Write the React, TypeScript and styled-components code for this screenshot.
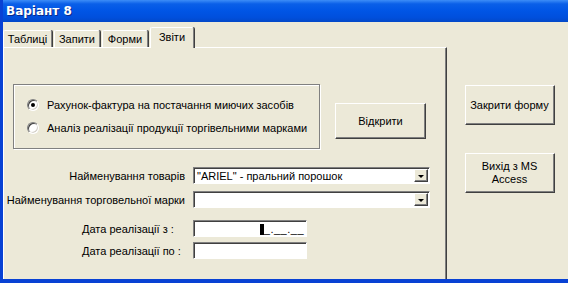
import styled, { createGlobalStyle } from 'styled-components'

const Global = createGlobalStyle`
  html, body { margin: 0; padding: 0; background: #ece9d8; }
  body { font-family: "Liberation Sans", Arial, sans-serif; font-size: 11px; color: #000; }
`

const Window = styled.div`
  width: 568px;
  height: 283px;
  display: flex;
  flex-direction: column;
  box-sizing: border-box;
  background: #ece9d8;
  border-left: 3px solid #0841d4;
  border-bottom: 4px solid #0841d4;
  overflow: hidden;
`

const TitleBar = styled.div`
  height: 22px;
  margin-left: -3px;
  display: flex;
  align-items: center;
  padding-left: 6px;
  background: linear-gradient(180deg, #3d8df7 0%, #0a5fe8 18%, #0055e5 50%, #004fdc 80%, #0348c8 100%);
  color: #fff;
  font-family: "DejaVu Sans", Tahoma, sans-serif;
  font-weight: bold;
  font-size: 12px;
  text-shadow: 1px 1px 0 #0a2a8a;
  flex-shrink: 0;
`

const Body = styled.div`
  flex: 1;
  display: flex;
  min-height: 0;
`

const TabArea = styled.div`
  width: 444px;
  display: flex;
  flex-direction: column;
  padding-top: 5px;
`

const TabStrip = styled.div`
  display: flex;
  align-items: flex-end;
  gap: 2px;
  height: 20px;
`

const Tab = styled.div<{ $active?: boolean; $w: number }>`
  width: ${p => p.$w}px;
  box-sizing: border-box;
  height: ${p => (p.$active ? 21 : 17)}px;
  margin-bottom: ${p => (p.$active ? -1 : 0)}px;
  position: relative;
  z-index: ${p => (p.$active ? 2 : 1)};
  background: #ece9d8;
  border-top: 1px solid #fff;
  border-left: 1px solid #fff;
  border-right: 1px solid #808080;
  box-shadow: 1px 0 0 #404040;
  display: flex;
  align-items: ${p => (p.$active ? 'flex-start' : 'center')};
  padding-top: ${p => (p.$active ? 3 : 0)}px;
  justify-content: center;
  border-radius: 2px 2px 0 0;
`

const Pane = styled.div`
  flex: 1;
  box-sizing: border-box;
  border-top: 1px solid #fff;
  border-left: 1px solid #fff;
  border-right: 1px solid #404040;
  box-shadow: inset -1px 0 0 #808080;
  display: flex;
  flex-direction: column;
  padding: 36px 0 0 9px;
`

const TopRow = styled.div`
  display: flex;
  align-items: flex-end;
  gap: 15px;
`

const OptionGroup = styled.div`
  width: 307px;
  height: 65px;
  box-sizing: border-box;
  border: 1px solid #808080;
  box-shadow: inset 1px 1px 0 #fff, 1px 1px 0 #fff;
  display: flex;
  flex-direction: column;
  justify-content: center;
  gap: 9px;
  padding-left: 13px;
`

const OptionRow = styled.label`
  display: flex;
  align-items: center;
  gap: 8px;
  height: 14px;
`

const Radio = styled.span<{ $checked?: boolean }>`
  width: 12px;
  height: 12px;
  box-sizing: border-box;
  border-radius: 50%;
  background: #fff;
  border: 1px solid;
  border-color: #808080 #fff #fff #808080;
  box-shadow: inset 1px 1px 0 #404040, inset -1px -1px 0 #d4d0c8;
  display: flex;
  align-items: center;
  justify-content: center;
  &::after {
    content: '';
    width: 4px;
    height: 4px;
    border-radius: 50%;
    background: ${p => (p.$checked ? '#000' : 'transparent')};
  }
`

const Button = styled.div<{ $w: number; $h: number }>`
  width: ${p => p.$w}px;
  height: ${p => p.$h}px;
  box-sizing: border-box;
  border: 1px solid;
  border-color: #fff #404040 #404040 #fff;
  box-shadow: inset -1px -1px 0 #808080;
  background: #ece9d8;
  display: flex;
  align-items: center;
  justify-content: center;
  text-align: center;
  line-height: 13px;
  flex-shrink: 0;
`

const OpenButton = styled(Button)`
  margin-bottom: 10px;
`

const Form = styled.div`
  display: grid;
  grid-template-columns: 179px auto;
  column-gap: 8px;
  margin-top: 18px;
  margin-left: -7px;
  align-items: center;
`

const Label = styled.div<{ $left?: boolean; $gap: number }>`
  text-align: ${p => (p.$left ? 'left' : 'right')};
  padding-left: ${p => (p.$left ? 76 : 0)}px;
  margin-bottom: ${p => p.$gap}px;
  white-space: nowrap;
`

const Field = styled.div<{ $w: number; $gap: number }>`
  width: ${p => p.$w}px;
  height: 17px;
  box-sizing: border-box;
  background: #fff;
  border: 1px solid;
  border-color: #808080 #fff #fff #808080;
  box-shadow: inset 1px 1px 0 #404040;
  margin-bottom: ${p => p.$gap}px;
  display: flex;
  align-items: center;
  padding-left: 3px;
  white-space: nowrap;
`

const ComboText = styled.span`
  flex: 1;
`

const DropButton = styled.span`
  width: 14px;
  height: 13px;
  margin-right: 1px;
  box-sizing: border-box;
  background: #ece9d8;
  border: 1px solid;
  border-color: #fff #404040 #404040 #fff;
  box-shadow: inset -1px -1px 0 #808080;
  display: flex;
  align-items: center;
  justify-content: center;
  &::after {
    content: '';
    border-left: 3px solid transparent;
    border-right: 3px solid transparent;
    border-top: 3px solid #000;
    margin-top: 1px;
  }
`

const MaskText = styled.span`
  margin-left: auto;
  margin-right: 2px;
  letter-spacing: 0.5px;
`

const Caret = styled.span`
  display: inline-block;
  width: 4px;
  height: 11px;
  background: #000;
  vertical-align: -2px;
`

const RightColumn = styled.div`
  flex: 1;
  display: flex;
  flex-direction: column;
  align-items: center;
  padding-top: 63px;
  padding-left: 4px;
  gap: 28px;
`

export default function App() {
  return (
    <>
      <Global />
      <Window>
        <TitleBar>Варіант 8</TitleBar>
        <Body>
          <TabArea>
            <TabStrip>
              <Tab $w={49}>Таблиці</Tab>
              <Tab $w={46}>Запити</Tab>
              <Tab $w={46}>Форми</Tab>
              <Tab $w={44} $active>Звіти</Tab>
            </TabStrip>
            <Pane>
              <TopRow>
                <OptionGroup>
                  <OptionRow><Radio $checked />Рахунок-фактура на постачання миючих засобів</OptionRow>
                  <OptionRow><Radio />Аналіз реалізації продукції торгівельними марками</OptionRow>
                </OptionGroup>
                <OpenButton $w={91} $h={36}>Відкрити</OpenButton>
              </TopRow>
              <Form>
                <Label $gap={7}>Найменування товарів</Label>
                <Field $w={237} $gap={7}>
                  <ComboText>"ARIEL" - пральний порошок</ComboText>
                  <DropButton />
                </Field>
                <Label $gap={12}>Найменування торговельної марки</Label>
                <Field $w={237} $gap={12}>
                  <ComboText />
                  <DropButton />
                </Field>
                <Label $left $gap={5}>Дата реалізації з :</Label>
                <Field $w={114} $gap={5}>
                  <MaskText><Caret />_.__.__</MaskText>
                </Field>
                <Label $left $gap={0}>Дата реалізації по :</Label>
                <Field $w={114} $gap={0} />
              </Form>
            </Pane>
          </TabArea>
          <RightColumn>
            <Button $w={90} $h={40}>Закрити форму</Button>
            <Button $w={90} $h={40}>Вихід з MS<br />Access</Button>
          </RightColumn>
        </Body>
      </Window>
    </>
  )
}
